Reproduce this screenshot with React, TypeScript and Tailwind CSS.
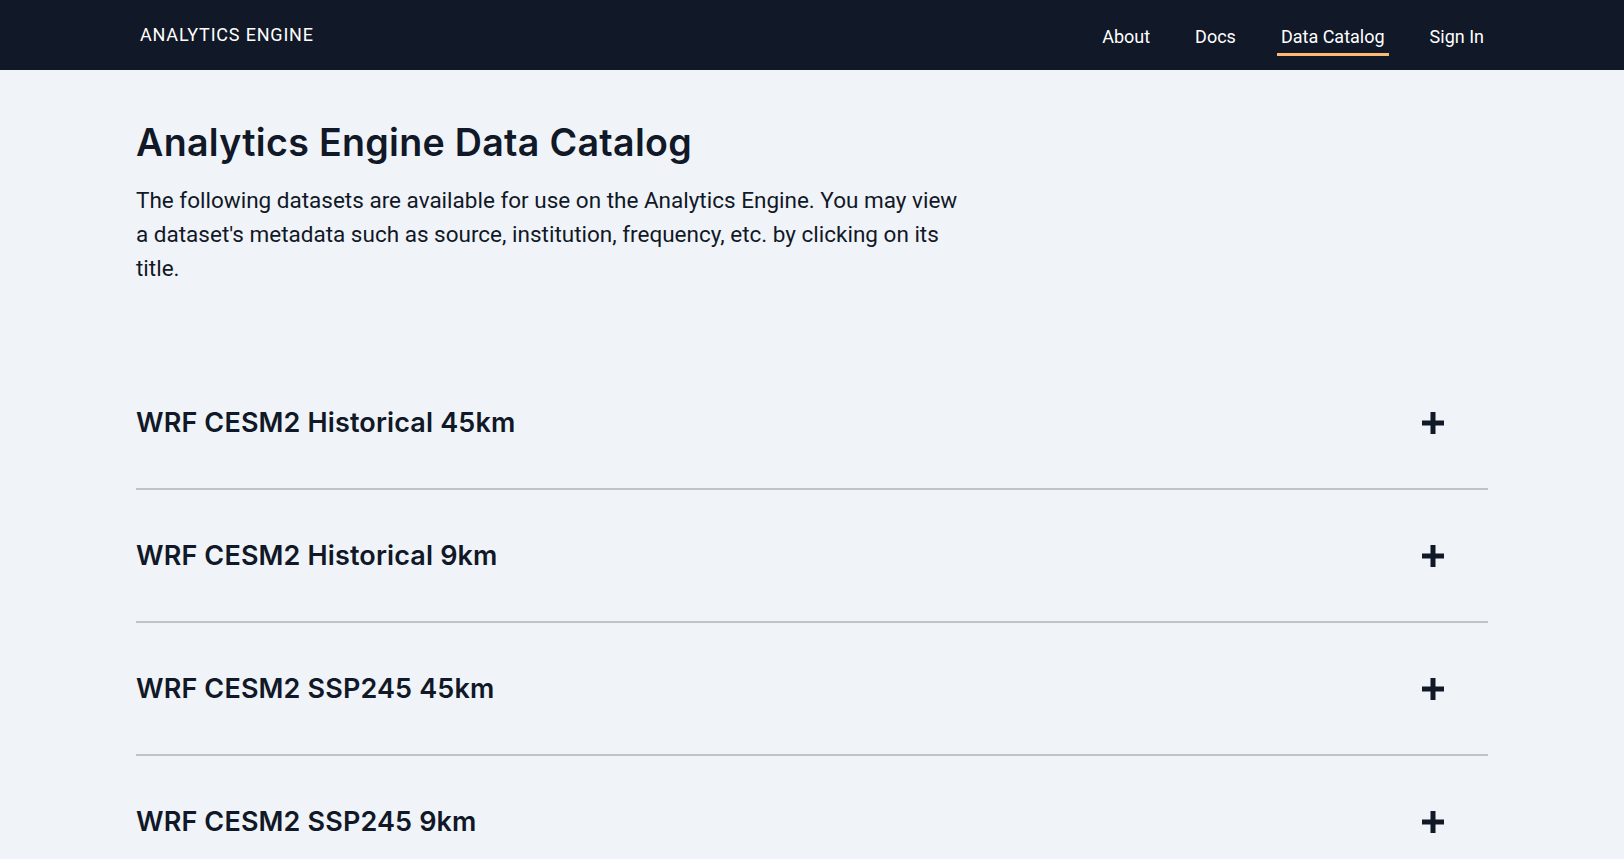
const datasets = [
  "WRF CESM2 Historical 45km",
  "WRF CESM2 Historical 9km",
  "WRF CESM2 SSP245 45km",
  "WRF CESM2 SSP245 9km",
  "WRF CESM2 SSP370 45km",
];

const navLinks = [
  { label: "About", active: false },
  { label: "Docs", active: false },
  { label: "Data Catalog", active: true },
  { label: "Sign In", active: false },
];

function PlusIcon() {
  return (
    <svg width="22" height="22" viewBox="0 0 22 22" fill="#111827" aria-hidden="true">
      <rect x="8.5" y="0" width="5" height="22" />
      <rect x="0" y="8.5" width="22" height="5" />
    </svg>
  );
}

function NavBar() {
  return (
    <header className="h-[70px] bg-[#111827] font-['Roboto',sans-serif]">
      <div className="flex h-full items-center justify-between px-[136px]">
        <span className="pb-[2px] pl-1 text-[18px] tracking-[0.045em] text-white">ANALYTICS ENGINE</span>
        <nav className="flex items-center gap-[37px] pt-[3px]">
          {navLinks.map((link) => (
            <a
              key={link.label}
              href="#"
              className={
                link.active
                  ? "border-b-[3px] border-[#fdba74] px-1 pt-[5px] pb-[3px] text-[18px] text-white"
                  : "border-b-[3px] border-transparent px-1 pt-[5px] pb-[3px] text-[18px] text-white"
              }
            >
              {link.label}
            </a>
          ))}
        </nav>
      </div>
    </header>
  );
}

function DatasetRow({ title }: { title: string }) {
  return (
    <button className="flex w-full items-center justify-between border-b-2 border-[#bfc2c6] py-[47.5px] pr-[44px] text-left">
      <span className="font-['Inter',sans-serif] text-[27px] leading-[36px] font-semibold tracking-[0.005em] text-[#111827]">
        {title}
      </span>
      <PlusIcon />
    </button>
  );
}

export default function App() {
  return (
    <div className="min-h-screen bg-[#f0f4f8]">
      <NavBar />
      <main className="px-[136px] pt-[51px]">
        <h1 className="font-['Inter',sans-serif] text-[37.6px] leading-[44px] font-semibold tracking-[0.008em] text-[#111827]">
          Analytics Engine Data Catalog
        </h1>
        <p className="mt-[18px] max-w-[830px] font-['Roboto',sans-serif] text-[22.5px] leading-[34px] text-[#111827]">
          The following datasets are available for use on the Analytics Engine. You may view a dataset's metadata
          such as source, institution, frequency, etc. by clicking on its title.
        </p>
        <div className="mt-[72px]">
          {datasets.map((d) => (
            <DatasetRow key={d} title={d} />
          ))}
        </div>
      </main>
    </div>
  );
}
